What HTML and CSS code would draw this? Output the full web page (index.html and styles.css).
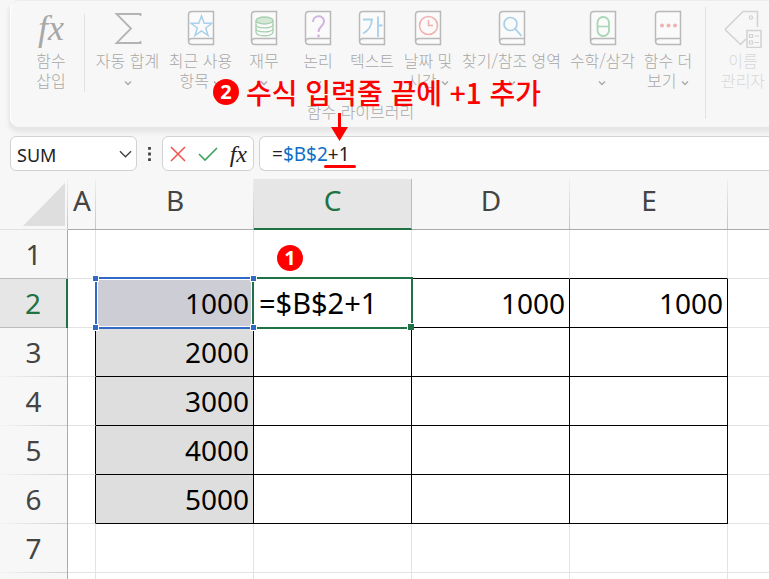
FILE: index.html
```html
<!DOCTYPE html>
<html lang="ko">
<head>
  <meta charset="UTF-8">
  <title>SUM - 수식 입력줄</title>
  <link rel="stylesheet" href="styles.css">
</head>
<body>

  <svg class="defs" aria-hidden="true">
    <symbol id="book" viewBox="0 0 28 36">
      <path d="M26.500 1.500H5Q1.500 1.500 1.500 5V31Q1.500 34.500 5 34.500H26.500ZM1.500 31.500Q2 28.500 5 28.500H26.500" fill="#fafafa" stroke="#b9b9b9" stroke-width="1.500"/>
    </symbol>
    <symbol id="chevron" viewBox="0 0 8 6">
      <path d="M1 1.500L4 4.500L7 1.500" fill="none" stroke="currentColor" stroke-width="1.300"/>
    </symbol>
  </svg>

  <div class="ribbon">
    <div class="group">
      <div class="tools">
        <button class="tool">
          <span class="icon fx">fx</span>
          <span>함수<br>삽입</span>
        </button>
        <div class="divider"></div>
        <button class="tool wide">
          <svg class="icon" viewBox="0 0 28 36"><path d="M26.500 6V4H2.500L17 18.500L2.500 33H26.500V31" fill="none" stroke="#b4b4b4" stroke-width="1.800"/></svg>
          <span>자동 합계<br><svg class="chev"><use href="#chevron"/></svg></span>
        </button>
        <button class="tool wide">
          <svg class="icon" viewBox="0 0 28 36"><use href="#book"/><path d="M14.500 6L17.200 13.300H25L18.700 18L21 25.500L14.500 21L8 25.500L10.300 18L4 13.300H11.800Z" fill="none" stroke="#a9d0ea" stroke-width="1.500"/></svg>
          <span>최근 사용<br>항목 <svg class="chev"><use href="#chevron"/></svg></span>
        </button>
        <button class="tool">
          <svg class="icon" viewBox="0 0 28 36"><use href="#book"/><g fill="#d5e8d7" stroke="#a9d0b0" stroke-width="1.300"><path d="M6 10.500V22C6 27 23 27 23 22V10.500" fill="#fafafa"/><ellipse cx="14.500" cy="10.500" rx="8.500" ry="3.500"/><path d="M6 14.500C6 19 23 19 23 14.500M6 18.500C6 23 23 23 23 18.500" fill="none"/></g></svg>
          <span>재무<br><svg class="chev"><use href="#chevron"/></svg></span>
        </button>
        <button class="tool">
          <svg class="icon" viewBox="0 0 28 36"><use href="#book"/><path d="M9 12C9 4.500 20 4.500 20 11.500C20 16 14.500 16 14.500 22" fill="none" stroke="#d3b3df" stroke-width="2"/><circle cx="14.500" cy="26" r="1.400" fill="#d3b3df"/></svg>
          <span>논리<br><svg class="chev"><use href="#chevron"/></svg></span>
        </button>
        <button class="tool">
          <svg class="icon" viewBox="0 0 28 36"><use href="#book"/><path d="M5 9.500H14C13.500 16 10 21 5 23.500M20 6.500V27M20 15.500H24.500" fill="none" stroke="#a9d0ea" stroke-width="1.800"/></svg>
          <span>텍스트<br><svg class="chev"><use href="#chevron"/></svg></span>
        </button>
        <button class="tool medium">
          <svg class="icon" viewBox="0 0 28 36"><use href="#book"/><circle cx="14.500" cy="15.500" r="9" fill="none" stroke="#f0b3b0" stroke-width="1.600"/><path d="M14.500 10V15.500H19" fill="none" stroke="#f0b3b0" stroke-width="1.600"/></svg>
          <span>날짜 및<br>시간 <svg class="chev"><use href="#chevron"/></svg></span>
        </button>
        <button class="tool lookup">
          <svg class="icon" viewBox="0 0 28 36"><use href="#book"/><circle cx="12.500" cy="14" r="6.500" fill="none" stroke="#a9d0ea" stroke-width="1.700"/><path d="M17 18.500L23.500 26" stroke="#a9d0ea" stroke-width="1.900"/></svg>
          <span>찾기/참조 영역<br><svg class="chev"><use href="#chevron"/></svg></span>
        </button>
        <button class="tool wide">
          <svg class="icon" viewBox="0 0 28 36"><use href="#book"/><rect x="8.500" y="7" width="11.500" height="19" rx="5.700" fill="none" stroke="#a9d6b4" stroke-width="1.800"/><path d="M8.500 16.500H20" stroke="#a9d6b4" stroke-width="1.600"/></svg>
          <span>수학/삼각<br><svg class="chev"><use href="#chevron"/></svg></span>
        </button>
        <button class="tool medium">
          <svg class="icon" viewBox="0 0 28 36"><use href="#book"/><g fill="#f0b3b0"><circle cx="8" cy="15.500" r="2"/><circle cx="14.500" cy="15.500" r="2"/><circle cx="21" cy="15.500" r="2"/></g></svg>
          <span>함수 더<br>보기 <svg class="chev"><use href="#chevron"/></svg></span>
        </button>
      </div>
      <div class="caption">함수 라이브러리</div>
    </div>
    <div class="divider tall"></div>
    <button class="tool disabled" disabled>
      <svg class="icon tag" viewBox="0 0 40 38"><path d="M2 19.500L20 1.500H34.500V17M2 19.500L17.500 34.500L23 29" fill="none" stroke="#d2d2d2" stroke-width="1.600"/><circle cx="28" cy="7.500" r="1.600" fill="none" stroke="#d2d2d2" stroke-width="1.200"/><rect x="24" y="20.500" width="14" height="17" fill="#f7f7f7" stroke="#d2d2d2" stroke-width="1.500"/><path d="M26.500 24.500H29.500V27.500H26.500ZM26.500 31H29.500V34H26.500ZM31.500 26H36M31.500 32.500H36" fill="none" stroke="#d2d2d2" stroke-width="1.200"/></svg>
      <span>이름<br>관리자</span>
    </button>
  </div>

  <div class="note"><span class="badge">2</span>수식 입력줄 끝에 +1 추가</div>

  <div class="formula-bar">
    <label class="name-box">
      <select aria-label="이름 상자">
        <option>SUM</option>
        <option>AVERAGE</option>
        <option>IF</option>
      </select>
      <svg viewBox="0 0 14 8"><path d="M1 1L7 7L13 1" fill="none" stroke="#444" stroke-width="1.500"/></svg>
    </label>
    <svg class="dots" viewBox="0 0 3 15"><path d="M0 0H3V3H0ZM0 6H3V9H0ZM0 12H3V15H0Z" fill="#444"/></svg>
    <div class="actions">
      <button aria-label="취소"><svg viewBox="0 0 16 16"><path d="M1 1L15 15M15 1L1 15" stroke="#f0524a" stroke-width="1.500"/></svg></button>
      <button aria-label="입력"><svg class="check" viewBox="0 0 20 16"><path d="M1 8L7 14L19 2" fill="none" stroke="#3fa35b" stroke-width="1.600"/></svg></button>
      <button class="insert-fx" aria-label="함수 삽입">fx</button>
    </div>
    <div class="formula" contenteditable="true" role="textbox" aria-label="수식 입력줄" spellcheck="false">=<span class="ref">$B$2</span><span class="added">+1<svg class="arrow" viewBox="0 0 18 28"><path d="M8 0H11V14H18L9.500 28L1 14H8Z" fill="#f00"/></svg></span></div>
  </div>

  <div class="sheet">
    <table>
      <colgroup>
        <col class="col-head"><col class="col-a"><col class="col"><col class="col"><col class="col"><col class="col"><col>
      </colgroup>
      <thead>
        <tr>
          <th class="corner"><svg viewBox="0 0 42 43"><path d="M42 0V43H0Z" fill="#dedede"/></svg></th>
          <th>A</th><th>B</th><th class="active">C</th><th>D</th><th>E</th><th></th>
        </tr>
      </thead>
      <tbody>
        <tr><th>1</th><td></td><td class="edge"></td><td class="edge"><span class="badge step">1</span></td><td class="edge"></td><td class="edge"></td><td></td></tr>
        <tr class="data">
          <th class="active">2</th><td></td>
          <td class="source">1000<span class="ref-box"><i></i><i></i><i></i><i></i></span></td>
          <td class="editing">=$B$2+1<span class="edit-box"></span></td>
          <td>1000</td><td>1000</td><td></td>
        </tr>
        <tr class="data"><th>3</th><td></td><td class="fill">2000</td><td></td><td></td><td></td><td></td></tr>
        <tr class="data"><th>4</th><td></td><td class="fill">3000</td><td></td><td></td><td></td><td></td></tr>
        <tr class="data"><th>5</th><td></td><td class="fill">4000</td><td></td><td></td><td></td><td></td></tr>
        <tr class="data"><th>6</th><td></td><td class="fill">5000</td><td></td><td></td><td></td><td></td></tr>
        <tr><th>7</th><td></td><td></td><td></td><td></td><td></td><td></td></tr>
        <tr><th></th><td></td><td></td><td></td><td></td><td></td><td></td></tr>
      </tbody>
    </table>
  </div>

</body>
</html>
```

FILE: styles.css
```css
* {
  box-sizing: border-box;
}
body {
  margin: 0;
  height: 100vh;
  display: flex;
  flex-direction: column;
  position: relative;
  overflow: hidden;
  background-color: #f7f7f7;
  font-family: "Noto Sans", "Noto Sans CJK KR", sans-serif;
}
button {
  border: none;
  background: none;
  padding: 0;
  font: inherit;
  color: inherit;
}
.defs {
  position: absolute;
  width: 0;
  height: 0;
}

/* ribbon */
.ribbon {
  display: flex;
  flex-shrink: 0;
  margin-left: 10px;
  padding: 0 0 5px 13px;
  overflow: hidden;
  border-top: 1px solid #ececec;
  border-left: 1px solid #fff;
  border-radius: 9px 0 0 9px;
  box-shadow: 0 3px 3px 1px #e6e6e6, 0 5px 5px 2px #eee;
  color: #a8a8a8;
  font-family: "Noto Sans CJK KR", sans-serif;
  font-size: 16px;
  font-weight: 300;
  line-height: 20px;
}
.group {
  flex-shrink: 0;
}
.tools {
  display: flex;
  height: 100px;
}
.tool {
  flex-shrink: 0;
  width: 54px;
  padding-top: 9px;
  display: flex;
  flex-direction: column;
  align-items: center;
  gap: 4px;
  white-space: nowrap;
}
.tool.medium {
  width: 58px;
}
.tool.wide {
  width: 73px;
}
.tool.lookup {
  width: 109px;
}
.tool.disabled {
  width: 74px;
  color: #d8d8d8;
}
.icon {
  height: 36px;
  width: 32px;
}
.icon.tag {
  width: 40px;
  height: 38px;
  margin-bottom: -2px;
}
.fx {
  font-family: "Liberation Serif", serif;
  font-style: italic;
  font-weight: 400;
  font-size: 36px;
  line-height: 36px;
}
.chev {
  width: 8px;
  height: 6px;
  vertical-align: middle;
}
.divider {
  flex-shrink: 0;
  width: 1px;
  height: 78px;
  margin: 13px 6px 0;
  background-color: #e2e2e2;
}
.divider.tall {
  height: 112px;
  margin: 6px 0 0 8px;
}
.caption {
  margin-bottom: 1px;
  text-align: center;
}

/* red notes */
.note {
  position: absolute;
  left: 213px;
  top: 72px;
  display: flex;
  align-items: center;
  gap: 7px;
  color: #f00;
  font-family: "Noto Sans CJK KR", sans-serif;
  font-size: 28px;
  font-weight: 500;
  line-height: 40px;
  white-space: nowrap;
}
.badge {
  display: block;
  width: 26px;
  height: 26px;
  border-radius: 50%;
  background-color: #f00;
  color: #fff;
  font-family: "Noto Sans", sans-serif;
  font-size: 20px;
  font-weight: 700;
  line-height: 26px;
  text-align: center;
}

/* formula bar */
.formula-bar {
  display: flex;
  align-items: center;
  flex-shrink: 0;
  margin: 9px 0 8px 10px;
  height: 35px;
  font-size: 18px;
  color: #222;
}
.name-box,
.actions,
.formula {
  height: 35px;
  border: 1px solid #d2d2d2;
  border-radius: 6px;
  background-color: #fff;
}
.name-box {
  display: flex;
  align-items: center;
  width: 127px;
  padding: 0 4px 0 6px;
}
.name-box select {
  flex: 1;
  min-width: 0;
  appearance: none;
  border: none;
  background: none;
  padding: 2px 0 0;
  font: inherit;
  color: inherit;
}
.name-box svg {
  width: 13px;
  height: 8px;
}
.dots {
  width: 3px;
  height: 14px;
  margin: 0 11px;
}
.actions {
  display: flex;
  align-items: center;
  justify-content: space-between;
  width: 92px;
  padding: 0 6px 0 7px;
}
.actions button {
  display: flex;
}
.actions svg {
  width: 16px;
  height: 16px;
}
.actions svg.check {
  width: 20px;
}
.actions .insert-fx {
  font-family: "Liberation Serif", serif;
  font-style: italic;
  font-size: 24px;
  line-height: 28px;
}
.formula {
  flex: 1;
  margin-left: 5px;
  border-right: none;
  border-radius: 6px 0 0 6px;
  padding: 1px 0 0 12px;
  font-size: 19px;
  line-height: 32px;
  outline: none;
}
.ref {
  color: #0f6fc6;
}
.added {
  position: relative;
}
.added::after {
  content: "";
  position: absolute;
  left: -4px;
  right: -6px;
  bottom: -1px;
  height: 3px;
  border-radius: 2px;
  background-color: #f00;
}
.arrow {
  position: absolute;
  left: 2px;
  top: -28px;
  width: 18px;
  height: 28px;
}

/* sheet */
.sheet {
  flex: 1;
  min-height: 0;
  overflow: hidden;
}
table {
  width: 100%;
  table-layout: fixed;
  border-collapse: separate;
  border-spacing: 0;
  font-size: 28px;
  line-height: 36px;
}
.col-head {
  width: 68px;
}
.col-a {
  width: 28px;
}
.col {
  width: 158px;
}
th {
  padding: 0;
  font-weight: 400;
  color: #444;
}
thead th {
  height: 51px;
  padding-bottom: 8px;
  border-bottom: 1px solid #ababab;
  background: linear-gradient(#f0f0f0, #c4c4c4) right / 1px 100% no-repeat;
}
thead th:last-child {
  background: none;
}
thead th.active {
  padding-bottom: 7px;
  border-bottom: 2px solid #1f7244;
  border-right: 1px solid #bbb;
  background: #e6e6e6;
  color: #1f7244;
}
thead .corner {
  padding: 4px 3px 3px 0;
  border-bottom-color: #e0e0e0;
  text-align: right;
}
.corner svg {
  display: block;
  width: 42px;
  height: 43px;
  margin-left: auto;
}
tbody th {
  height: 49px;
  padding-bottom: 2px;
  border-right: 1px solid #ababab;
  background: linear-gradient(to right, #f4f4f4, #cfcfcf) bottom / 100% 1px no-repeat;
}
tbody th.active {
  border-right: 2px solid #1f7244;
  background: #e6e6e6;
  box-shadow: 0 -1px #bbb, inset 0 -1px #bbb;
  color: #1f7244;
}
td {
  position: relative;
  padding: 0 4px 0 5px;
  border-right: 1px solid #e3e3e3;
  border-bottom: 1px solid #e3e3e3;
  background-color: #fff;
  color: #000;
  text-align: right;
  white-space: nowrap;
}
td:last-child {
  border-right: none;
}
td.edge {
  border-bottom-color: #000;
}
.data td:not(:last-child) {
  border-right-color: #000;
}
.data td:nth-child(n+3):not(:last-child) {
  border-bottom-color: #000;
}
td.fill {
  background-color: #dedede;
}
td.source {
  background-color: #cdcdd6;
}
td.editing {
  font-size: 29px;
  text-align: left;
}
.step {
  position: absolute;
  left: 23px;
  top: 15px;
}
.ref-box {
  position: absolute;
  z-index: 2;
  inset: -2px -1px -2px -1px;
  border: 2px solid #3169c6;
  border-right: 2px solid #1f7244;
  box-shadow: inset 0 0 0 1px #fff;
}
.ref-box i {
  position: absolute;
  width: 7px;
  height: 7px;
  border: 1px solid #fff;
  background-color: #3169c6;
}
.ref-box i:nth-child(1) {
  left: -5px;
  top: -4px;
}
.ref-box i:nth-child(2) {
  right: -5px;
  top: -4px;
}
.ref-box i:nth-child(3) {
  left: -5px;
  bottom: -4px;
}
.ref-box i:nth-child(4) {
  right: -5px;
  bottom: -4px;
}
.edit-box {
  position: absolute;
  z-index: 1;
  inset: -2px;
  border: 2px solid #1f7244;
}
.edit-box::after {
  content: "";
  position: absolute;
  right: -3px;
  bottom: -3px;
  width: 6px;
  height: 6px;
  border: 1px solid #fff;
  border-width: 1px 0 0 1px;
  background-color: #1f7244;
}
```
